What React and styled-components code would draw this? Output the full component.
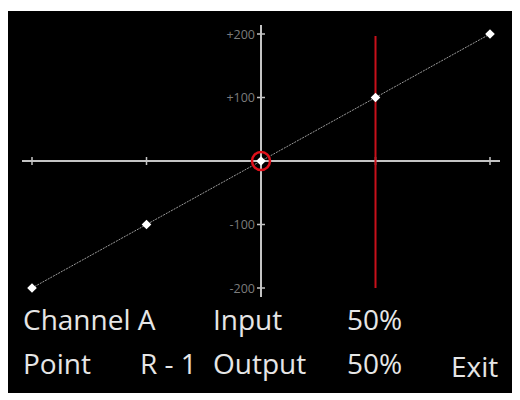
import React from 'react'
import styled, { createGlobalStyle } from 'styled-components'

const Global = createGlobalStyle`
    body {
        margin: 11px 8px;
        background: #fff;
        font-family: "Open Sans", "Noto Sans", sans-serif;
    }
`

const Screen = styled.div`
    width: 504px;
    height: 382px;
    background: #000;
    display: flex;
    flex-direction: column;
    box-sizing: border-box;
    padding-bottom: 8px;
`

const Chart = styled.svg`
    display: block;
    width: 504px;
    height: 286px;
    flex: none;
`

const Info = styled.div`
    display: grid;
    grid-template-columns: 117px 73px 134px 104px 1fr;
    grid-template-rows: 44px 44px;
    padding-left: 15px;
    color: #e6e6e6;
    font-size: 28px;
    line-height: 44px;
    white-space: nowrap;
`

const Cell = styled.div`
    grid-column: ${p => p.span ? `span ${p.span}` : 'auto'};
`

const ExitButton = styled.div`
    position: relative;
    top: 3px;
    cursor: pointer;
`

const cx = 253
const cy = 150
const stepX = 114.5
const stepY = 63.5

const yTicks = [
    { v: 2, label: '+200' },
    { v: 1, label: '+100' },
    { v: -1, label: '-100' },
    { v: -2, label: '-200' },
]

const xTicks = [-2, -1, 1, 2]

const points = [-2, -1, 0, 1, 2].map(i => ({ x: cx + i * stepX, y: cy - i * stepY }))

const Curve = () => (
    <Chart viewBox="0 0 504 286">
        <line x1={14} y1={cy} x2={492} y2={cy} stroke="#c4c4c4" strokeWidth="2" />
        {xTicks.map(i => (
            <line key={i} x1={cx + i * stepX} y1={cy - 4} x2={cx + i * stepX} y2={cy + 4} stroke="#c4c4c4" strokeWidth="1.5" />
        ))}
        <line x1={cx} y1={14} x2={cx} y2={286} stroke="#c4c4c4" strokeWidth="2" />
        {yTicks.map(t => (
            <g key={t.v}>
                <line x1={cx - 4} y1={cy - t.v * stepY} x2={cx + 4} y2={cy - t.v * stepY} stroke="#c4c4c4" strokeWidth="1.5" />
                <text x={cx - 6} y={cy - t.v * stepY + 4.5} textAnchor="end" fontSize="12.5" fill="#7c7c7c" fontFamily="Open Sans, sans-serif">{t.label}</text>
            </g>
        ))}
        <polyline points={points.map(p => `${p.x},${p.y}`).join(' ')} fill="none" stroke="#9a9a9a" strokeWidth="1" strokeDasharray="2 1" />
        <line x1={cx + stepX} y1={25} x2={cx + stepX} y2={277} stroke="#c8101a" strokeWidth="2" />
        {points.map((p, i) => (
            <rect key={i} x={p.x - 3.4} y={p.y - 3.4} width="6.8" height="6.8" fill="#fff" transform={`rotate(45 ${p.x} ${p.y})`} />
        ))}
        <circle cx={cx} cy={cy} r="9" fill="none" stroke="#e0101a" strokeWidth="2.5" />
    </Chart>
)

const App = () => {
    return(
        <Screen>
            <Global />
            <Curve />
            <Info>
                <Cell span={2}>Channel A</Cell>
                <Cell>Input</Cell>
                <Cell>50%</Cell>
                <Cell />
                <Cell>Point</Cell>
                <Cell>R - 1</Cell>
                <Cell>Output</Cell>
                <Cell>50%</Cell>
                <ExitButton>Exit</ExitButton>
            </Info>
        </Screen>
    )
}

export default App
